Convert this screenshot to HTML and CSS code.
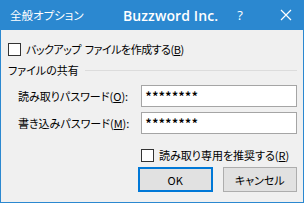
FILE: index.html
```html
<!DOCTYPE html>
<html lang="ja">
<head>
<meta charset="utf-8">
<link rel="stylesheet" href="styles.css">
</head>
<body>
<div class="window">
  <div class="titlebar">
    <span class="title">全般オプション</span>
    <span class="brand">Buzzword Inc.</span>
    <span class="help">?</span>
    <span class="close">
      <svg width="12" height="12" viewBox="0 0 12 12"><path d="M1 1L11 11M11 1L1 11" stroke="#fff" stroke-width="1.2" fill="none"/></svg>
    </span>
  </div>
  <div class="content">
    <div class="check-row first">
      <span class="box"></span>
      <span class="label tight">バックアップ ファイルを作成する(<u>B</u>)</span>
    </div>
    <div class="group-head">
      <span>ファイルの共有</span>
      <span class="rule"></span>
    </div>
    <div class="field">
      <span class="flabel">読み取りパスワード(<u>O</u>):</span>
      <span class="input">********</span>
    </div>
    <div class="field">
      <span class="flabel">書き込みパスワード(<u>M</u>):</span>
      <span class="input">********</span>
    </div>
    <div class="check-row second">
      <span class="box"></span>
      <span class="label">読み取り専用を推奨する(<u>R</u>)</span>
    </div>
    <div class="buttons">
      <span class="btn default">OK</span>
      <span class="btn">キャンセル</span>
    </div>
  </div>
</div>
</body>
</html>
```
FILE: styles.css
```css
html, body {
  margin: 0;
  padding: 0;
}
body {
  width: 304px;
  height: 203px;
  overflow: hidden;
  font-family: "Noto Sans CJK JP", "Noto Sans", sans-serif;
  font-size: 11px;
  font-feature-settings: "palt";
  color: #000;
}
.window {
  box-sizing: border-box;
  width: 304px;
  height: 203px;
  background: #f0f0f0;
  border: 1px solid #2b88d0;
  border-top: none;
  display: flex;
  flex-direction: column;
}
.titlebar {
  height: 30px;
  background: #2b88d0;
  color: #fff;
  display: flex;
  align-items: center;
  margin: 0 -1px;
  flex: none;
}
.title {
  margin-left: 10px;
  font-size: 11.5px;
  width: 113px;
}
.brand {
  font-family: "Open Sans", "Noto Sans", sans-serif;
  font-weight: 600;
  font-size: 14px;
  letter-spacing: 0.1px;
}
.help {
  margin-left: 19px;
  font-family: "Open Sans", sans-serif;
  font-size: 13px;
}
.close {
  margin-left: 37px;
  display: flex;
  align-items: center;
}
.content {
  padding: 0 6px 0 7px;
  display: flex;
  flex-direction: column;
}
.check-row {
  display: flex;
  align-items: center;
  height: 24px;
}
.check-row.first {
  margin-top: 7px;
}
.box {
  box-sizing: border-box;
  width: 13px;
  height: 13px;
  border: 1px solid #333;
  background: #fff;
  flex: none;
  margin-right: 5px;
}
.label {
  white-space: nowrap;
}
.label.tight {
  letter-spacing: -0.5px;
  word-spacing: 2px;
}
.group-head {
  display: flex;
  align-items: center;
  height: 16px;
  margin-top: 1px;
}
.rule {
  flex: 1;
  height: 1px;
  background: #dcdcdc;
  margin: 0 0 0 6px;
}
.field {
  display: flex;
  align-items: center;
  height: 22px;
  padding-left: 10px;
}
.group-head + .field {
  margin-top: 7px;
}
.field + .field {
  margin-top: 5px;
}
.flabel {
  width: 123px;
  white-space: nowrap;
}
.input {
  box-sizing: border-box;
  width: 157px;
  height: 22px;
  border: 1px solid #a5a5a5;
  background: #fff;
  padding-left: 4px;
  font-size: 12px;
  font-weight: bold;
  line-height: 20px;
  letter-spacing: 0.5px;
}
.check-row.second {
  margin-top: 9px;
  padding-left: 133px;
}
.buttons {
  display: flex;
  gap: 10px;
  margin-top: 0;
  padding-left: 130px;
}
.btn {
  box-sizing: border-box;
  width: 75px;
  height: 25px;
  background: #e1e1e1;
  border: 1px solid #adadad;
  display: flex;
  align-items: center;
  justify-content: center;
}
.btn.default {
  border: 2px solid #0078d7;
}
```
